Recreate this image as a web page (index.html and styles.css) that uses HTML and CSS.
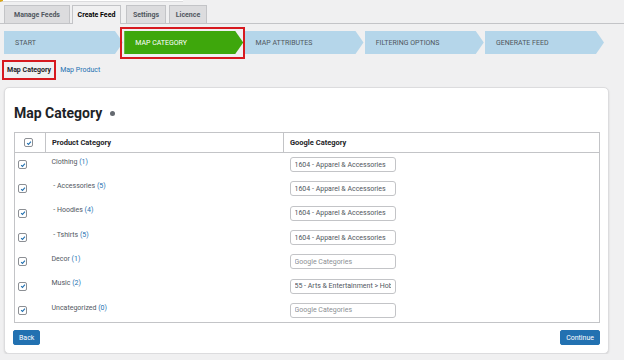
FILE: index.html
```html
<!DOCTYPE html>
<html lang="en">
<head>
  <meta charset="UTF-8" />
  <meta name="viewport" content="width=device-width, initial-scale=1.0"/>
  <title>Create Feed - Map Category</title>
  <link rel="stylesheet" href="styles.css">
</head>
<body>
  <div class="notice-edge"></div>

  <div class="wrap">
    <nav class="nav-tabs">
      <a class="nav-tab tab-manage">Manage Feeds</a>
      <a class="nav-tab tab-create active">Create Feed</a>
      <a class="nav-tab tab-settings">Settings</a>
      <a class="nav-tab tab-licence">Licence</a>
    </nav>

    <ol class="steps">
      <li class="step"><span>Start</span></li>
      <li class="step current"><span>Map Category</span></li>
      <li class="step"><span>Map Attributes</span></li>
      <li class="step"><span>Filtering Options</span></li>
      <li class="step"><span>Generate Feed</span></li>
    </ol>

    <div class="subtabs">
      <a class="subtab active">Map Category</a>
      <a class="subtab">Map Product</a>
    </div>

    <div class="card">
      <h2 class="card-title">Map Category <span class="help"></span></h2>

      <table class="map-table">
        <colgroup>
          <col class="col-cb">
          <col class="col-name">
          <col>
        </colgroup>
        <thead>
          <tr>
            <th class="cb"><span class="check"><svg viewBox="0 0 8 8"><path d="M1.5 4.1 3.3 5.9 6.6 2.1"/></svg></span></th>
            <th>Product Category</th>
            <th>Google Category</th>
          </tr>
        </thead>
        <tbody>
          <tr>
            <td class="cb"><span class="check"><svg viewBox="0 0 8 8"><path d="M1.5 4.1 3.3 5.9 6.6 2.1"/></svg></span></td>
            <td class="name">Clothing <span class="count">(1)</span></td>
            <td class="gc"><input type="text" value="1604 - Apparel &amp; Accessories" placeholder="Google Categories"></td>
          </tr>
          <tr>
            <td class="cb"><span class="check"><svg viewBox="0 0 8 8"><path d="M1.5 4.1 3.3 5.9 6.6 2.1"/></svg></span></td>
            <td class="name">&nbsp;- Accessories <span class="count">(5)</span></td>
            <td class="gc"><input type="text" value="1604 - Apparel &amp; Accessories" placeholder="Google Categories"></td>
          </tr>
          <tr>
            <td class="cb"><span class="check"><svg viewBox="0 0 8 8"><path d="M1.5 4.1 3.3 5.9 6.6 2.1"/></svg></span></td>
            <td class="name">&nbsp;- Hoodies <span class="count">(4)</span></td>
            <td class="gc"><input type="text" value="1604 - Apparel &amp; Accessories" placeholder="Google Categories"></td>
          </tr>
          <tr>
            <td class="cb"><span class="check"><svg viewBox="0 0 8 8"><path d="M1.5 4.1 3.3 5.9 6.6 2.1"/></svg></span></td>
            <td class="name">&nbsp;- Tshirts <span class="count">(5)</span></td>
            <td class="gc"><input type="text" value="1604 - Apparel &amp; Accessories" placeholder="Google Categories"></td>
          </tr>
          <tr>
            <td class="cb"><span class="check"><svg viewBox="0 0 8 8"><path d="M1.5 4.1 3.3 5.9 6.6 2.1"/></svg></span></td>
            <td class="name">Decor <span class="count">(1)</span></td>
            <td class="gc"><input type="text" value="" placeholder="Google Categories"></td>
          </tr>
          <tr>
            <td class="cb"><span class="check"><svg viewBox="0 0 8 8"><path d="M1.5 4.1 3.3 5.9 6.6 2.1"/></svg></span></td>
            <td class="name">Music <span class="count">(2)</span></td>
            <td class="gc"><input type="text" value="55 - Arts &amp; Entertainment &gt; Hobbies &amp; Creative Arts" placeholder="Google Categories"></td>
          </tr>
          <tr>
            <td class="cb"><span class="check"><svg viewBox="0 0 8 8"><path d="M1.5 4.1 3.3 5.9 6.6 2.1"/></svg></span></td>
            <td class="name">Uncategorized <span class="count">(0)</span></td>
            <td class="gc"><input type="text" value="" placeholder="Google Categories"></td>
          </tr>
        </tbody>
      </table>

      <div class="card-footer">
        <button class="btn">Back</button>
        <button class="btn">Continue</button>
      </div>
    </div>
  </div>
</body>
</html>
```

FILE: styles.css
```css
body {
  margin: 0;
  font-family: Roboto, "Liberation Sans", Arial, sans-serif;
  background: #f0f0f1;
  color: #1d2327;
}
.notice-edge {
  width: 180px;
  height: 1px;
  background: #fff;
  border-left: 3px solid #dba617;
  border-bottom: 1px solid #dcdcde;
}
.wrap {
  padding: 0 15px 0 4px;
}

/* top tabs */
.nav-tabs {
  display: flex;
  align-items: flex-end;
  margin: 3px -15px 0 -4px;
  padding-left: 4px;
  border-bottom: 1px solid #c3c4c7;
}
.nav-tab {
  box-sizing: border-box;
  height: 18px;
  line-height: 18px;
  text-align: center;
  font-size: 7px;
  font-weight: 700;
  color: #50575e;
  background: #dcdcde;
  border: 1px solid #c3c4c7;
  border-bottom: none;
}
.nav-tab.active {
  color: #000;
  background: #f0f0f1;
  margin-bottom: -1px;
  height: 19px;
}
.tab-manage { width: 66px; }
.tab-create { width: 49px; margin-left: 2px; }
.tab-settings { width: 40px; margin-left: 5px; }
.tab-licence { width: 38px; margin-left: 3px; }

/* wizard steps */
.steps {
  list-style: none;
  margin: 7px 0 0;
  padding: 0;
  display: flex;
  gap: 1.25px;
}
.step {
  position: relative;
  width: 119px;
  height: 23px;
}
.step span {
  display: flex;
  align-items: center;
  height: 100%;
  padding-left: 11px;
  background: #b5d6ea;
  color: #50575e;
  font-size: 7px;
  text-transform: uppercase;
  clip-path: polygon(0 0, calc(100% - 8px) 0, 100% 50%, calc(100% - 8px) 100%, 0 100%);
}
.step.current span {
  background: #3ea70c;
  color: #fff;
}
.step.current::after {
  content: "";
  position: absolute;
  left: -4px;
  right: -2px;
  top: -4px;
  bottom: -5px;
  border: 2px solid #d7191f;
}

/* sub tabs */
.subtabs {
  display: flex;
  align-items: center;
  margin: 6px 0 0 -2px;
  font-size: 7px;
}
.subtab {
  color: #2271b1;
  line-height: 10px;
  padding: 3px 2px;
}
.subtab.active {
  color: #1d2327;
  font-weight: 700;
  border: 2px solid #d7191f;
  padding: 3px 3px;
  margin-right: 2px;
}

/* card */
.card {
  margin-top: 7px;
  background: #fff;
  border: 1px solid #dcdcde;
  border-radius: 5px;
  box-shadow: 0 1px 2px rgba(0,0,0,0.12);
  padding: 16px 8px 8px 9px;
}
.card-title {
  margin: 0 0 10px;
  font-size: 14px;
  line-height: 18px;
  font-weight: 700;
  display: flex;
  align-items: center;
}
.help {
  display: inline-block;
  width: 5px;
  height: 5px;
  margin-left: 8px;
  border-radius: 50%;
  background: #646970;
}

/* mapping table */
.map-table {
  width: 100%;
  border-collapse: collapse;
  border: 1px solid #c3c4c7;
  table-layout: fixed;
}
.col-cb {
  width: 31px;
}
.col-name {
  width: 238px;
}
.map-table thead tr {
  height: 20px;
}
.map-table th {
  padding: 0 6px;
  text-align: left;
  font-size: 7.5px;
  font-weight: 700;
  color: #1d2327;
  border-right: 1px solid #c3c4c7;
  border-bottom: 1px solid #c3c4c7;
}
.map-table th.cb {
  padding: 0 0 0 9px;
}
.map-table tbody tr {
  height: 24px;
}
.map-table tbody tr:nth-child(3n) {
  height: 25px;
}
.map-table td {
  padding: 0;
}
.map-table td.cb {
  padding-left: 3px;
}
.map-table td.name {
  vertical-align: top;
  padding: 4px 6px 0;
  font-size: 7px;
  line-height: 10px;
  color: #50575e;
}
.count {
  color: #2271b1;
}
.map-table td.gc {
  padding-left: 6px;
}
.check {
  display: block;
  width: 9px;
  height: 9px;
  box-sizing: border-box;
  padding: 0.5px;
  border: 1px solid #8c8f94;
  border-radius: 2px;
  background: #fff;
}
.check svg {
  display: block;
  width: 6px;
  height: 6px;
}
.check path {
  fill: none;
  stroke: #2271b1;
  stroke-width: 1.4;
}
.gc input {
  display: block;
  width: 106px;
  height: 15px;
  box-sizing: border-box;
  padding: 0 4px;
  border: 1px solid #c3c4c7;
  border-radius: 3px;
  font-family: inherit;
  font-size: 7px;
  color: #50575e;
}
.gc input::placeholder {
  color: #8c8f94;
}

.card-footer {
  display: flex;
  justify-content: space-between;
  margin: 7px 0 0 -1px;
}
.btn {
  height: 15px;
  padding: 0 5px;
  font-family: inherit;
  font-size: 7px;
  color: #fff;
  background: #2271b1;
  border: 1px solid #2271b1;
  border-radius: 2px;
}
```
